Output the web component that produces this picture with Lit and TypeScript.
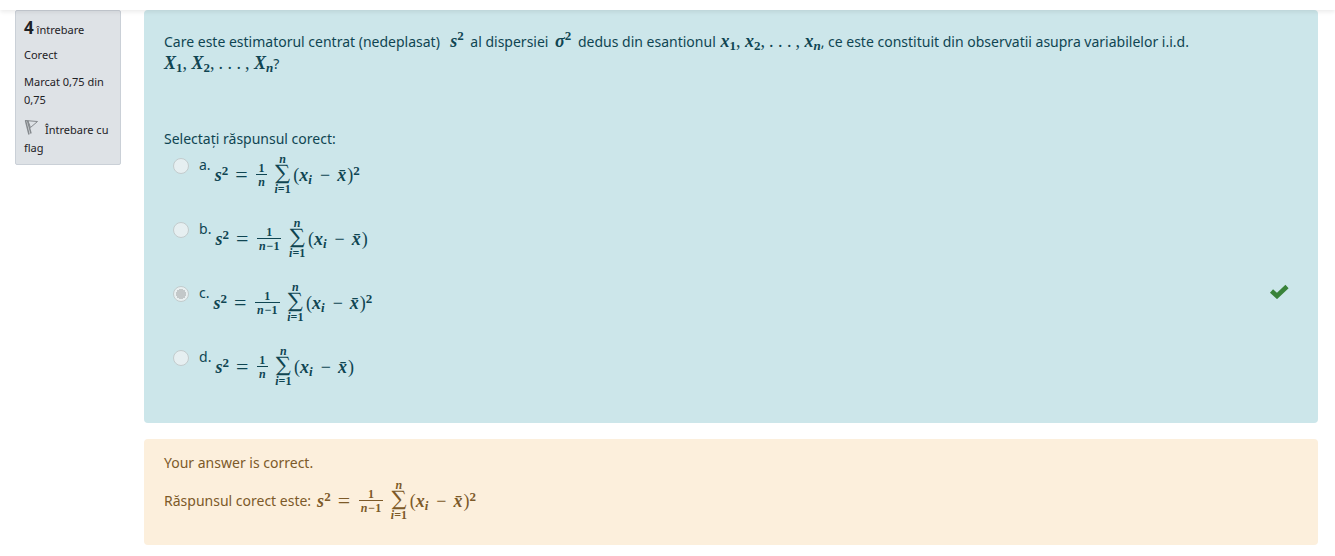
import { LitElement, html, css, svg, nothing } from "lit";
import { customElement, property } from "lit/decorators.js";

@customElement("sum-formula")
class SumFormula extends LitElement {
  @property() den = "n";
  @property({ type: Boolean }) squared = false;

  static styles = css`
    :host {
      display: inline-flex;
      vertical-align: middle;
    }
    .row {
      display: flex;
      align-items: center;
      font-family: "Liberation Serif", serif;
      font-size: 18px;
      line-height: 18px;
      white-space: nowrap;
    }
    i {
      font-style: italic;
      font-weight: bold;
      line-height: 0;
    }
    .lead {
      margin-right: 7px;
    }
    .equals {
      width: 12px;
      text-align: center;
      font-size: 22px;
    }
    sup,
    sub {
      font-size: 13px;
      line-height: 0;
    }
    sup {
      font-weight: bold;
      vertical-align: 6px;
    }
    sub {
      vertical-align: -3px;
    }
    .frac,
    .sum {
      display: flex;
      flex-direction: column;
      align-items: center;
      font-size: 12px;
    }
    .frac {
      margin: 0 7px 0 9px;
      line-height: 12px;
      font-weight: bold;
    }
    .num {
      align-self: stretch;
      text-align: center;
      border-bottom: 1px solid currentColor;
    }
    .den {
      padding: 1px 2px 0;
    }
    .minus-one {
      margin-left: 1px;
    }
    .sum {
      line-height: 10px;
      font-weight: bold;
    }
    .sum > i {
      line-height: 9px;
    }
    .sigma {
      font-family: "DejaVu Math TeX Gyre", "Liberation Serif", serif;
      font-size: 18px;
      line-height: 20px;
      font-weight: normal;
    }
    .term {
      margin-left: 2px;
    }
    .minus {
      margin: 0 7px 0 8px;
    }
    .close {
      margin-left: 1px;
    }
  `;

  render() {
    return html`<span class="row">
      <span class="lead"><i>s</i><sup>2</sup></span>
      <span class="equals">=</span>
      <span class="frac">
        <span class="num">1</span>
        <span class="den"><i>n</i>${this.den === "n" ? nothing : html`<span class="minus-one">−1</span>`}</span>
      </span>
      <span class="sum">
        <i>n</i>
        <span class="sigma">∑</span>
        <span><i>i</i>=1</span>
      </span>
      <span class="term">(<i>x</i><sub><i>i</i></sub><span class="minus">−</span><i>x̄</i><span class="close">)</span>${this.squared ? html`<sup>2</sup>` : nothing}</span>
    </span>`;
  }
}

const answers = [
  { key: "a", den: "n", squared: true },
  { key: "b", den: "n-1", squared: false },
  { key: "c", den: "n-1", squared: true, chosen: true },
  { key: "d", den: "n", squared: false },
];

@customElement("app-root")
class AppRoot extends LitElement {
  static styles = css`
    :host {
      display: block;
      font-family: "Noto Sans", sans-serif;
      font-size: 14px;
      line-height: 22px;
      color: #1d2125;
    }
    .header {
      height: 10px;
      background: #fff;
      box-shadow: 0 2px 4px rgba(0, 0, 0, 0.08);
      position: relative;
    }
    .question {
      display: grid;
      grid-template-columns: 106px minmax(0, 1fr);
      column-gap: 23px;
      align-items: start;
      padding: 0 17px 0 15px;
    }
    .info {
      box-sizing: border-box;
      padding: 7px 8px 6px;
      border: 1px solid #cad0d7;
      border-radius: 2px;
      background: #dee2e6;
      font-size: 11px;
      line-height: 18px;
    }
    .info h3 {
      margin: 0 0 6px;
      font-size: 11px;
      font-weight: normal;
      line-height: 20px;
    }
    .number {
      font-size: 17px;
      font-weight: bold;
    }
    .info p {
      margin: 0 0 9px;
    }
    .flag {
      display: block;
      padding: 1px 0;
      border: 0;
      background: none;
      font: inherit;
      color: inherit;
      text-align: left;
    }
    .flag svg {
      margin-right: 6px;
      vertical-align: -1px;
    }
    .card {
      border-radius: 4px;
      padding: 21px 20px 17px;
    }
    .formulation {
      background: #cce6ea;
      color: #0f4552;
    }
    .text {
      margin: 0 0 53px;
    }
    .m {
      margin: 0 3px;
      font-family: "Liberation Serif", serif;
      font-size: 18px;
      line-height: 0;
      white-space: nowrap;
    }
    .m.edge {
      margin: 0;
    }
    .m.list {
      margin: 0 0 0 1px;
    }
    .m i {
      font-weight: bold;
    }
    .m sup,
    .m sub {
      font-size: 13px;
      font-weight: bold;
      line-height: 0;
    }
    .m sup {
      vertical-align: 7px;
    }
    .m sub {
      vertical-align: -3px;
    }
    .dots {
      margin: 0 4px;
    }
    fieldset {
      margin: 0;
      padding: 0;
      border: 0;
    }
    legend {
      padding: 0;
    }
    .answer {
      display: flex;
      align-items: flex-start;
      box-sizing: border-box;
      height: 64px;
      padding: 5px 9px 0;
    }
    .answer input {
      appearance: none;
      box-sizing: border-box;
      width: 16px;
      height: 16px;
      margin: 3px 10px 0 0;
      border: 1px solid #c3cccd;
      border-radius: 50%;
      background: #e6eff1;
    }
    .answer input:checked {
      background: radial-gradient(circle, #c3c8c9 0 5px, #e9f0f1 5px);
    }
    .answer label {
      display: flex;
      align-items: flex-start;
      flex: 1;
    }
    .answer sum-formula {
      margin-left: 4px;
    }
    .key {
      line-height: 20px;
    }
    .tick {
      margin-top: 1px;
    }
    .feedback {
      margin-top: 16px;
      padding: 13px 20px 25px;
      background: #fcefdc;
      color: #7d5a29;
    }
    .feedback p {
      margin: 0;
    }
    .right {
      display: flex;
      align-items: center;
      gap: 6px;
      padding-top: 7px;
    }
  `;

  render() {
    return html`
      <div class="header"></div>
      <main class="question">
        <aside class="info">
          <h3><span class="number">4</span> întrebare</h3>
          <p>Corect</p>
          <p>Marcat 0,75 din 0,75</p>
          <button class="flag" type="button">
            <svg width="15" height="16" viewBox="0 0 15 16" fill="none" stroke="#85898d" aria-hidden="true">
              <path stroke-width="1.500" d="M1.500 1.500 5 15.500M3.500 1.500 7 14.500" />
              <path stroke-width="1" d="M1 1.500 13.500 2.500 6.500 8.500 4 2" />
            </svg>Întrebare cu flag
          </button>
        </aside>
        <div>
          <section class="card formulation">
            <p class="text">
              Care este estimatorul centrat (nedeplasat)&nbsp; <span class="m"><i>s</i><sup>2</sup></span>
              al dispersiei <span class="m"><i>σ</i><sup>2</sup></span> dedus din esantionul
              <span class="m list"><i>x</i><sub>1</sub>, <i>x</i><sub>2</sub>,<span class="dots">. . .</span>, <i>x</i><sub><i>n</i></sub></span>,
              ce este constituit din observatii asupra variabilelor i.i.d.<br />
              <span class="m edge"><i>X</i><sub>1</sub>, <i>X</i><sub>2</sub>,<span class="dots">. . .</span>, <i>X</i><sub><i>n</i></sub></span>?
            </p>
            <fieldset>
              <legend>Selectați răspunsul corect:</legend>
              ${answers.map(
                (a) => html`<div class="answer">
                  <input type="radio" name="answer" id=${a.key} disabled ?checked=${!!a.chosen} />
                  <label for=${a.key}>
                    <span class="key">${a.key}.</span>
                    <sum-formula den=${a.den} ?squared=${a.squared}></sum-formula>
                  </label>
                  ${a.chosen
                    ? html`<svg class="tick" width="20" height="15" viewBox="0 0 20 15" role="img" aria-label="Corect">
                        ${svg`<path d="M2.500 7 8 12 18 2.500" fill="none" stroke="#39833a" stroke-width="4.600" />`}
                      </svg>`
                    : nothing}
                </div>`
              )}
            </fieldset>
          </section>
          <section class="card feedback">
            <p>Your answer is correct.</p>
            <p class="right">Răspunsul corect este: <sum-formula den="n-1" squared></sum-formula></p>
          </section>
        </div>
      </main>
    `;
  }
}
